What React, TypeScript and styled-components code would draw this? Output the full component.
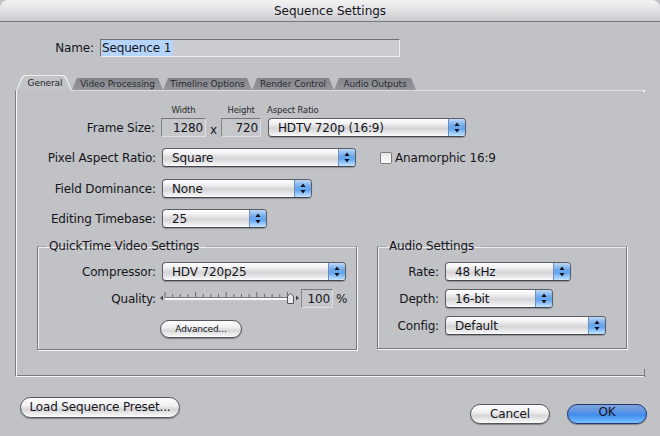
import * as React from 'react';
import styled, { createGlobalStyle } from 'styled-components';

const FONT = '"DejaVu Sans", "Noto Sans", sans-serif';

const Global = createGlobalStyle`
  html, body {
    margin: 0;
    padding: 0;
    background: #c1c2c6;
  }
`;

const Window = styled.div`
  width: 660px;
  height: 436px;
  overflow: hidden;
  background: #c1c2c6;
  color: #15151a;
  font-family: ${FONT};
  font-size: 12px;
  letter-spacing: -0.15px;
  display: flex;
  flex-direction: column;
`;

const TitleBar = styled.div`
  height: 21px;
  flex: none;
  border-bottom: 1px solid #77787c;
  border-radius: 8px 8px 0 0;
  background: linear-gradient(#f2f2f3, #e6e6e8 40%, #c9cace);
  text-align: center;
  line-height: 22px;
  font-size: 12px;
  letter-spacing: 0;
`;

const NameRow = styled.div`
  display: flex;
  align-items: center;
  height: 18px;
  margin-top: 17px;
`;

const NameField = styled.div`
  width: 297px;
  height: 16px;
  border: 1px solid #eeeef0;
  border-top-color: #6f7074;
  border-left-color: #77787c;
  background: #cbccd0;
  padding-left: 1px;
  line-height: 16px;
`;

const Selected = styled.span`
  background: #b5d4fb;
  display: inline-block;
  height: 16px;
  padding-right: 2px;
`;

const TabStrip = styled.div`
  display: flex;
  align-items: flex-end;
  height: 15px;
  margin: 18px 0 0 16px;
`;

const Tab = styled.div<{ $w: number; $active?: boolean }>`
  position: relative;
  width: ${(p) => p.$w}px;
  height: ${(p) => (p.$active ? 16 : 12)}px;
  margin-bottom: ${(p) => (p.$active ? -1 : 0)}px;
  clip-path: ${(p) =>
    p.$active
      ? 'polygon(0 100%, 5px 3px, 8px 0, calc(100% - 8px) 0, calc(100% - 5px) 3px, 100% 100%)'
      : 'polygon(5px 0, calc(100% - 5px) 0, 100% 100%, 0 100%)'};
  background: ${(p) =>
    p.$active ? '#eeeef0' : 'linear-gradient(#85868c, #96979d)'};
  color: ${(p) => (p.$active ? '#1c1c20' : '#2a2a30')};
  font-size: 9px;
  letter-spacing: -0.1px;
  line-height: ${(p) => (p.$active ? 17 : 12)}px;
  text-align: center;
  white-space: nowrap;
  z-index: ${(p) => (p.$active ? 1 : 0)};
  ${(p) =>
    p.$active &&
    `padding-left: 2px;
    box-sizing: border-box;
    &::before {
      content: '';
      position: absolute;
      inset: 1px 1px 0 1px;
      z-index: -1;
      background: #c3c4c8;
      clip-path: polygon(0 100%, 5px 3px, 8px 0, calc(100% - 8px) 0, calc(100% - 5px) 3px, 100% 100%);
    }`}
`;

const Pane = styled.div`
  position: relative;
  height: 271px;
  margin: 0 15px;
  border-top: 1px solid #dcdde0;
  border-left: 1px solid #7c7d81;
  border-bottom: 1px solid #f6f6f8;
  box-shadow: inset 1px 0 0 #f6f6f8, inset 0 -1px 0 #77787c;
  padding-top: 14px;
  &::before {
    content: '';
    position: absolute;
    right: 0;
    top: -1px;
    width: 2px;
    height: 2px;
    background: #f4f4f6;
  }
  &::after {
    content: '';
    position: absolute;
    right: 0;
    bottom: -1px;
    width: 1px;
    height: 8px;
    background: #77787c;
  }
`;

const CaptionRow = styled.div`
  display: flex;
  height: 10px;
  padding-left: 145px;
  font-size: 8.5px;
  line-height: 10px;
  color: #2b2b30;
`;

const Caption = styled.div<{ $w: number; $left?: boolean }>`
  width: ${(p) => p.$w}px;
  text-align: ${(p) => (p.$left ? 'left' : 'center')};
  flex: none;
`;

const Row = styled.div<{ $top: number }>`
  display: flex;
  align-items: center;
  height: 19px;
  margin-top: ${(p) => p.$top}px;
`;

const Label = styled.div<{ $w: number }>`
  width: ${(p) => p.$w}px;
  flex: none;
  text-align: right;
  margin-right: 6px;
  white-space: nowrap;
`;

const NumberBox = styled.div<{ $w: number }>`
  width: ${(p) => p.$w}px;
  height: 19px;
  flex: none;
  box-sizing: border-box;
  border: 1px solid #dfe0e3;
  border-top-color: #77787c;
  border-left-color: #85868a;
  background: #c6c7cb;
  text-align: right;
  line-height: 18px;
  padding-right: 2px;
`;

const Times = styled.span`
  width: 15px;
  flex: none;
  text-align: center;
  padding-top: 5px;
`;

const SelectBox = styled.div<{ $w: number; $ml?: number }>`
  width: ${(p) => p.$w}px;
  height: 19px;
  margin-left: ${(p) => p.$ml ?? 0}px;
  flex: none;
  box-sizing: border-box;
  display: flex;
  border: 1px solid #5d5e64;
  border-bottom-color: #45464c;
  border-radius: 4px;
  overflow: hidden;
  background: linear-gradient(#ffffff, #f2f2f3 25%, #d5d5d8 55%, #f0f0f1 90%, #fff);
  box-shadow: 0 1px 1px rgba(60, 60, 70, 0.35);
`;

const SelectText = styled.div`
  flex: 1;
  padding-left: 9px;
  line-height: 18px;
  white-space: nowrap;
`;

const Stepper = styled.div`
  width: 16px;
  flex: none;
  display: flex;
  align-items: center;
  justify-content: center;
  background: linear-gradient(#bcd9f9, #6fa9ec 40%, #62a6f2 60%, #c6e6ff);
  border-left: 1px solid #6d8fbf;
`;

const Select = ({ w, ml, children }: { w: number; ml?: number; children: React.ReactNode }) => (
  <SelectBox $w={w} $ml={ml}>
    <SelectText>{children}</SelectText>
    <Stepper>
      <svg width="6" height="11" viewBox="0 0 6 11">
        <path d="M3 0.5 L5.6 4 H0.4 Z M3 10.5 L0.4 7 H5.6 Z" fill="#10131c" />
      </svg>
    </Stepper>
  </SelectBox>
);

const CheckLabel = styled.div`
  display: flex;
  align-items: center;
  gap: 3px;
  margin-left: 24px;
`;

const CheckBox = styled.div`
  width: 10px;
  height: 10px;
  border: 1px solid #7b7c80;
  border-radius: 2px;
  background: linear-gradient(#e6e6e8, #ffffff);
`;

const Groups = styled.div`
  display: flex;
  margin: 11px 0 0 21px;
  gap: 20px;
  align-items: flex-start;
`;

const Group = styled.fieldset<{ $w: number; $h: number }>`
  width: ${(p) => p.$w}px;
  height: ${(p) => p.$h}px;
  box-sizing: border-box;
  margin: 0;
  padding: 0;
  border: 1px solid #78797d;
  border-top-color: #a4a5a9;
  box-shadow: 1px 1px 0 #f6f6f8, inset 1px 1px 0 #eeeef0;
`;

const GroupTitle = styled.legend`
  margin-left: 8px;
  padding: 0 7px 0 3px;
  line-height: 14px;
  font-size: 12px;
`;

const Slider = styled.svg`
  flex: none;
  margin-left: -3px;
`;

const Percent = styled.span`
  margin-left: 3px;
`;

const Center = styled.div`
  display: flex;
  margin: 12px 0 0 122px;
`;

const PushButton = styled.div<{ $w: number; $h: number; $small?: boolean; $primary?: boolean }>`
  width: ${(p) => p.$w}px;
  height: ${(p) => p.$h}px;
  flex: none;
  box-sizing: border-box;
  border: 1px solid ${(p) => (p.$primary ? '#24376f' : '#55565b')};
  border-radius: ${(p) => p.$h / 2}px;
  text-align: center;
  line-height: ${(p) => p.$h - (p.$primary ? 5 : 2)}px;
  font-size: ${(p) => (p.$small ? 9 : 12)}px;
  background: ${(p) =>
    p.$primary
      ? 'linear-gradient(#7fa3df, #5f95e4 35%, #3f8cf0 55%, #79c0ff)'
      : 'linear-gradient(#fdfdfd, #f0f0f1 40%, #d6d6d9 60%, #fbfbfb)'};
  box-shadow: 0 1px 1px rgba(50, 50, 60, 0.45);
  white-space: nowrap;
`;

const Footer = styled.div`
  display: flex;
  align-items: flex-start;
  padding: 20px 13px 0 20px;
`;

const FooterRight = styled.div`
  display: flex;
  gap: 17px;
  margin: 7px 0 0 auto;
`;

const ticks = Array.from({ length: 17 }, (_, i) => 6 + i * 7.65);

const QualitySlider = () => (
  <Slider width="142" height="16" viewBox="0 0 142 16">
    <path d="M1 7 L4 4.5 V9.5 Z M137 4.5 L140 7 L137 9.5 Z" fill="#44454a" />
    {ticks.map((x, i) => (
      <line key={x} x1={x} x2={x} y1={i % 4 === 0 ? 1 : 3} y2="6" stroke="#66676c" strokeWidth="1" />
    ))}
    <rect x="6" y="6" width="124" height="1" fill="#77787c" />
    <rect x="6" y="7" width="124" height="2" fill="#fdfdfd" />
    <path d="M128.5 5 L131.5 2.5 L134.5 5 V12.5 H128.5 Z" fill="#e8e8ea" stroke="#55565b" strokeWidth="1" />
  </Slider>
);

export default function App() {
  return (
    <Window>
      <Global />
      <TitleBar>Sequence Settings</TitleBar>
      <NameRow>
        <Label $w={94}>Name:</Label>
        <NameField>
          <Selected>Sequence 1</Selected>
        </NameField>
      </NameRow>
      <TabStrip>
        <Tab $w={56} $active>General</Tab>
        <Tab $w={91}>Video Processing</Tab>
        <Tab $w={89}>Timeline Options</Tab>
        <Tab $w={82}>Render Control</Tab>
        <Tab $w={82}>Audio Outputs</Tab>
      </TabStrip>
      <Pane>
        <CaptionRow>
          <Caption $w={45}>Width</Caption>
          <Caption $w={15} />
          <Caption $w={40}>Height</Caption>
          <Caption $w={6} />
          <Caption $w={66} $left>Aspect Ratio</Caption>
        </CaptionRow>
        <Row $top={3}>
          <Label $w={139}>Frame Size:</Label>
          <NumberBox $w={45}>1280</NumberBox>
          <Times>x</Times>
          <NumberBox $w={40}>720</NumberBox>
          <Select w={198} ml={7}>HDTV 720p (16:9)</Select>
        </Row>
        <Row $top={11}>
          <Label $w={140}>Pixel Aspect Ratio:</Label>
          <Select w={194}>Square</Select>
          <CheckLabel>
            <CheckBox />
            Anamorphic 16:9
          </CheckLabel>
        </Row>
        <Row $top={12}>
          <Label $w={140}>Field Dominance:</Label>
          <Select w={150}>None</Select>
        </Row>
        <Row $top={11}>
          <Label $w={140}>Editing Timebase:</Label>
          <Select w={105}>25</Select>
        </Row>
        <Groups>
          <Group $w={320} $h={111}>
            <GroupTitle>QuickTime Video Settings</GroupTitle>
            <Row $top={9}>
              <Label $w={118}>Compressor:</Label>
              <Select w={184}>HDV 720p25</Select>
            </Row>
            <Row $top={8}>
              <Label $w={118}>Quality:</Label>
              <QualitySlider />
              <NumberBox $w={32}>100</NumberBox>
              <Percent>%</Percent>
            </Row>
            <Center>
              <PushButton $w={82} $h={18} $small>Advanced...</PushButton>
            </Center>
          </Group>
          <Group $w={250} $h={110}>
            <GroupTitle>Audio Settings</GroupTitle>
            <Row $top={9}>
              <Label $w={61}>Rate:</Label>
              <Select w={126}>48 kHz</Select>
            </Row>
            <Row $top={8}>
              <Label $w={61}>Depth:</Label>
              <Select w={108}>16-bit</Select>
            </Row>
            <Row $top={8}>
              <Label $w={61}>Config:</Label>
              <Select w={161}>Default</Select>
            </Row>
          </Group>
        </Groups>
      </Pane>
      <Footer>
        <PushButton $w={160} $h={21}>Load Sequence Preset...</PushButton>
        <FooterRight>
          <PushButton $w={80} $h={20}>Cancel</PushButton>
          <PushButton $w={80} $h={20} $primary>OK</PushButton>
        </FooterRight>
      </Footer>
    </Window>
  );
}
